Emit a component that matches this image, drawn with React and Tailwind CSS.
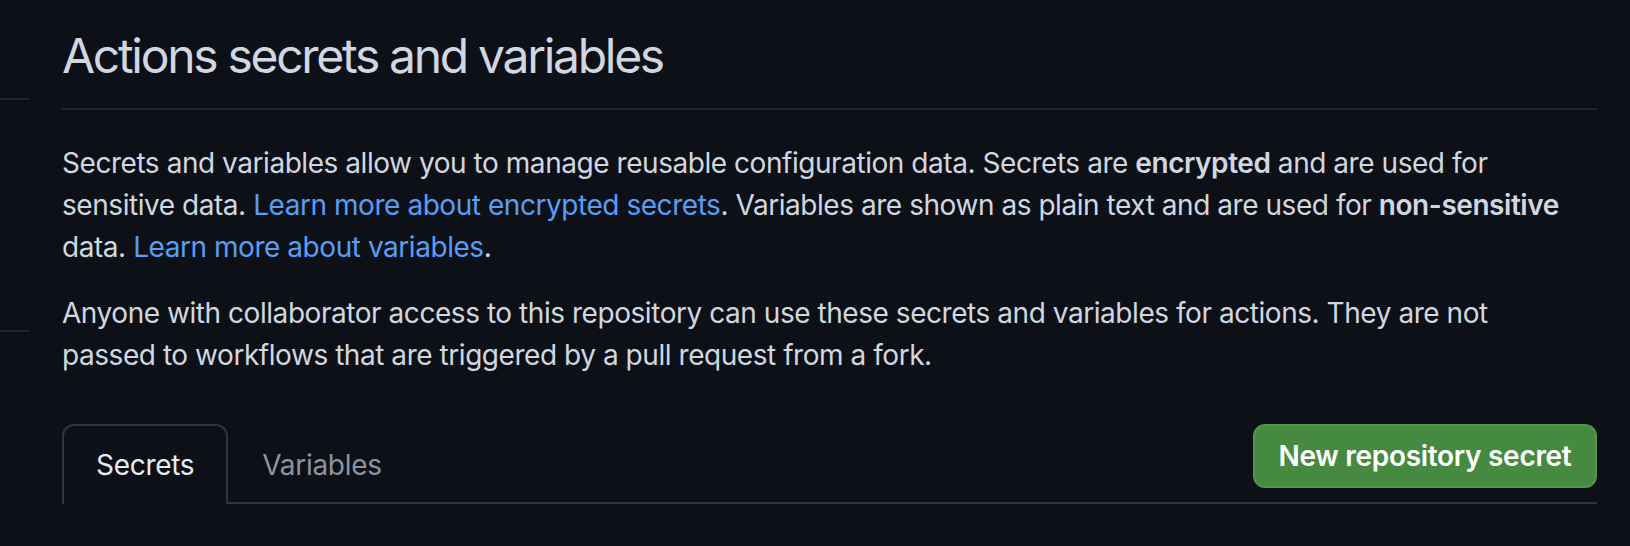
export default function App() {
    return (
        <div className="flex h-[546px] bg-[#0d1117] text-[#d1d7e0] font-['Inter',sans-serif] overflow-hidden">
            {/* left nav stubs */}
            <div className="w-[29px] shrink-0">
                <div className="mt-[98px] border-t-2 border-[#21262d]" />
                <div className="mt-[230px] border-t-2 border-[#21262d]" />
            </div>

            <main className="ml-[33px] w-[1535px] shrink-0">
                <h2 className="pt-[20px] pb-[16px] border-b-2 border-[#21262d] text-[48px] leading-[72px] font-normal tracking-[-2.3px]">
                    Actions secrets and variables
                </h2>

                <p className="mt-[32px] text-[28px] leading-[42px] tracking-[-0.45px]">
                    Secrets and variables allow you to manage reusable configuration data. Secrets are{" "}
                    <strong className="font-semibold">encrypted</strong> and are used for sensitive data.{" "}
                    <a href="#" className="text-[#579ef7]">Learn more about encrypted secrets</a>. Variables are shown as plain
                    text and are used for <strong className="font-semibold whitespace-nowrap">non-sensitive</strong> data.{" "}
                    <a href="#" className="text-[#579ef7]">Learn more about variables</a>.
                </p>

                <p className="mt-[24px] text-[28px] leading-[42px] tracking-[-0.45px]">
                    Anyone with collaborator access to this repository can use these secrets and variables for actions. They
                    are not
                    <br />
                    passed to workflows that are triggered by a pull request from a fork.
                </p>

                <div className="mt-[48px] flex items-start justify-between border-b-2 border-[#30363d]">
                    <nav className="flex text-[28px] leading-[42px] tracking-[-0.3px]">
                        <a href="#" className="-mb-[2px] px-[32px] pt-[18px] pb-[18px] border-2 border-b-0 border-[#30363d] rounded-t-[12px] bg-[#0d1117] text-[#e6edf3]">
                            Secrets
                        </a>
                        <a href="#" className="-mb-[2px] px-[34px] pt-[20px] pb-[18px] text-[#8b949e]">
                            Variables
                        </a>
                    </nav>
                    <button className="w-[344px] h-[64px] rounded-[12px] bg-[#468a41] border-2 border-[#53944e] text-white text-[28px] font-semibold tracking-[-0.3px]">
                        New repository secret
                    </button>
                </div>
            </main>
        </div>
    );
}
